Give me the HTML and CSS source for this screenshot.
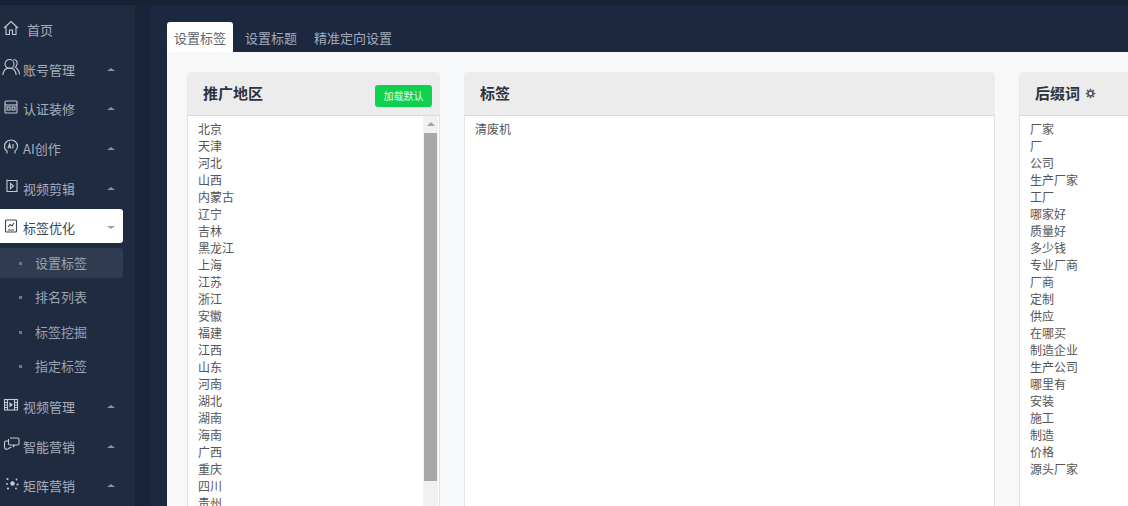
FILE: index.html
```html
<!DOCTYPE html>
<html lang="zh-CN">
<head>
    <meta charset="UTF-8">
    <meta name="viewport" content="width=device-width, initial-scale=1.0">
    <title>设置标签</title>
    <link rel="stylesheet" href="styles.css">
</head>
<body>

    <div class="topbar"></div>

    <div class="layout">
        <div class="sidebar">
            <div class="nav-item nav-home">
                <svg class="nav-icon" viewBox="0 0 18 18"><path d="M2 9 9 2.500 16 9M4 7.500V15.500H7.500V11H10.500V15.500H14V7.500"/></svg>
                <span>首页</span>
            </div>
            <div class="nav-item">
                <svg class="nav-icon" viewBox="0 0 18 18"><circle cx="7.500" cy="6" r="4.500"/><path d="M.8 17c.5-4.500 3-7 6.700-7s6.200 2.500 6.700 7M11.500 1.500c2.800 0 4 2.200 3.500 4.500s-1.500 3.500-2.500 3.500M14 10c2 1 3.200 3.500 3.500 6.500"/></svg>
                <span>账号管理</span><i class="caret"></i>
            </div>
            <div class="nav-item">
                <svg class="nav-icon" viewBox="0 0 18 18"><rect x="3" y="3" width="12" height="12" rx="1"/><path d="M3 7H15"/><rect x="5" y="9" width="3" height="3"/><rect x="10" y="9" width="3" height="3"/></svg>
                <span>认证装修</span><i class="caret"></i>
            </div>
            <div class="nav-item">
                <svg class="nav-icon" viewBox="0 0 18 18"><path d="M5 15.500V13C3 12 2.500 10 2.500 8.500 2.500 4.500 5.500 2 9 2s6.500 2.500 6.500 6.500c0 2-1 3.500-2.500 4.500V15.500"/><path d="M6 10.500 7.500 6 9 10.500M6.500 9H8.500M11 6V10.500"/></svg>
                <span>AI创作</span><i class="caret"></i>
            </div>
            <div class="nav-item">
                <svg class="nav-icon" viewBox="0 0 18 18"><path d="M5 2.500V3.500H15V14.500H5V3.500"/><path d="M8.500 6.500 11.500 9 8.500 11.500Z"/></svg>
                <span>视频剪辑</span><i class="caret"></i>
            </div>
            <div class="nav-item nav-active">
                <svg class="nav-icon" viewBox="0 0 18 18"><rect x="3.500" y="3" width="11" height="12" rx="1"/><path d="M6 13H12M6 10 8 7.500 10 9 12 6"/></svg>
                <span>标签优化</span><i class="caret caret-down"></i>
            </div>
            <div class="sub-nav">
                <div class="sub-item sub-active">设置标签</div>
                <div class="sub-item">排名列表</div>
                <div class="sub-item">标签挖掘</div>
                <div class="sub-item">指定标签</div>
            </div>
            <div class="nav-item">
                <svg class="nav-icon" viewBox="0 0 18 18"><rect x="2.500" y="3.500" width="13" height="10.500"/><path d="M5.500 3.500V14M12.500 3.500V14M2.500 6.500H5.500M2.500 9H5.500M2.500 11.500H5.500M12.500 6.500H15.500M12.500 9H15.500M12.500 11.500H15.500"/><path class="fill" d="M7.500 6 11 8.700 7.500 11.500Z"/></svg>
                <span>视频管理</span><i class="caret"></i>
            </div>
            <div class="nav-item">
                <svg class="nav-icon" viewBox="0 0 18 18"><path d="M8 3H15.500Q17 3 17 4.500V8.500Q17 10 15.500 10H13L11.500 11.500V10H8Q6.500 10 6.500 8.500V4"/><path d="M6 6H4Q2.500 6 2.500 7.500V12Q2.500 13.500 4 14.500L5.500 14L9.500 12"/></svg>
                <span>智能营销</span><i class="caret"></i>
            </div>
            <div class="nav-item">
                <svg class="nav-icon" viewBox="0 0 18 18"><g class="fill"><circle cx="10.500" cy="8.500" r="2.200"/><circle cx="5.500" cy="4" r="1.100"/><circle cx="14.500" cy="4.500" r=".9"/><circle cx="5" cy="9" r=".9"/><circle cx="15.500" cy="9.500" r="1.100"/><circle cx="6" cy="13.500" r="1.100"/><circle cx="14" cy="13.500" r=".9"/></g></svg>
                <span>矩阵营销</span><i class="caret"></i>
            </div>
        </div>

        <div class="side-strip"></div>

        <div class="main">
            <div class="tabs">
                <div class="tab tab-active">设置标签</div>
                <div class="tab">设置标题</div>
                <div class="tab">精准定向设置</div>
            </div>

            <div class="content">
                <div class="card card-side">
                    <div class="card-head">
                        <h2>推广地区</h2>
                        <button class="btn-load">加载默认</button>
                    </div>
                    <div class="card-body">
                        <div class="word-list" id="regionList"></div>
                        <div class="scrollbar">
                            <div class="scroll-up"></div>
                            <div class="scroll-thumb"></div>
                        </div>
                    </div>
                </div>

                <div class="card card-wide">
                    <div class="card-head">
                        <h2>标签</h2>
                    </div>
                    <div class="card-body">
                        <div class="word-list">清废机</div>
                    </div>
                </div>

                <div class="card card-side">
                    <div class="card-head card-head-left">
                        <h2>后缀词</h2>
                        <svg class="gear" viewBox="0 0 12 12"><circle cx="6" cy="6" r="2.700"/><path d="M6 .8V3M6 9V11.200M.8 6H3M9 6H11.200M2.300 2.300 3.900 3.900M8.100 8.100 9.700 9.700M9.700 2.300 8.100 3.900M3.900 8.100 2.300 9.700"/></svg>
                    </div>
                    <div class="card-body">
                        <div class="word-list" id="suffixList"></div>
                    </div>
                </div>
            </div>
        </div>
    </div>

    <script>
        const REGIONS = ["北京", "天津", "河北", "山西", "内蒙古", "辽宁", "吉林", "黑龙江", "上海", "江苏", "浙江", "安徽", "福建", "江西", "山东", "河南", "湖北", "湖南", "海南", "广西", "重庆", "四川", "贵州"];
        const SUFFIXES = ["厂家", "厂", "公司", "生产厂家", "工厂", "哪家好", "质量好", "多少钱", "专业厂商", "厂商", "定制", "供应", "在哪买", "制造企业", "生产公司", "哪里有", "安装", "施工", "制造", "价格", "源头厂家"];

        document.getElementById("regionList").innerText = REGIONS.join("\n");
        document.getElementById("suffixList").innerText = SUFFIXES.join("\n");
    </script>

</body>
</html>
```

FILE: styles.css
```css
/* General Styles */
html, body {
    height: 100%;
}

body {
    margin: 0;
    height: 506px;
    overflow: hidden;
    display: flex;
    flex-direction: column;
    background: #1c2840;
    font-family: "Noto Sans CJK SC", "Noto Sans", sans-serif;
    font-size: 13px;
}

.topbar {
    height: 5px;
    flex: none;
    background: #172133;
}

.layout {
    flex: 1;
    display: flex;
    min-height: 0;
}

/* Sidebar */
.sidebar {
    width: 135px;
    flex: none;
    padding: 5px 12px 0 0;
    box-sizing: border-box;
    background: #1f2b41;
}

.nav-item {
    height: 39.6px;
    display: flex;
    align-items: center;
    color: #a6aebb;
}

.nav-icon {
    width: 18px;
    height: 18px;
    flex: none;
    margin: -4px 3px 0 2px;
    fill: none;
    stroke: #c4cad3;
    stroke-width: 1.1;
}

.nav-icon .fill {
    fill: #c4cad3;
    stroke: none;
}

.nav-home .nav-icon {
    margin-right: 7px;
}

.nav-item .caret {
    margin-left: auto;
    margin-right: 8px;
    width: 0;
    height: 0;
    border-left: 4px solid transparent;
    border-right: 4px solid transparent;
    border-bottom: 3px solid #8792a3;
}

.nav-item .caret-down {
    border-bottom: 0;
    border-top: 3px solid #98a1af;
}

.nav-active {
    height: 34px;
    margin-top: 1px;
    padding-top: 4px;
    box-sizing: border-box;
    background: #ffffff;
    border-radius: 0 3px 3px 0;
    color: #3c4452;
}

.nav-active .nav-icon {
    stroke: #3c4452;
}

/* Sub Menu */
.sub-nav {
    padding: 5px 0 1.4px;
}

.sub-item {
    height: 30px;
    margin-bottom: 4.4px;
    padding: 1px 0 0 35px;
    box-sizing: border-box;
    line-height: 28px;
    color: #9aa3b1;
    border-radius: 0 3px 3px 0;
    position: relative;
}

.sub-item::before {
    content: "";
    position: absolute;
    left: 19px;
    top: 14px;
    width: 3px;
    height: 3px;
    background: #6d7787;
}

.sub-active {
    background: #2f3b50;
}

.side-strip {
    width: 15px;
    flex: none;
    background: #192438;
}

/* Main Area */
.main {
    flex: 1;
    min-width: 0;
    padding: 17px 0 0 17px;
    display: flex;
    flex-direction: column;
}

.tabs {
    display: flex;
    gap: 3px;
    height: 30px;
    flex: none;
}

.tab {
    padding: 0 6px 0 8px;
    line-height: 32px;
    color: #a3abb8;
    border-radius: 3px 3px 0 0;
}

.tab-active {
    padding: 0 7px;
    margin-right: 1px;
    background: #ffffff;
    color: #5c6470;
}

.content {
    flex: 1;
    display: flex;
    gap: 24px;
    padding: 20px 0 0 20px;
    background: #f7f8fa;
    overflow: hidden;
}

/* Card Styles */
.card {
    flex: none;
    display: flex;
    flex-direction: column;
    border-radius: 4px 4px 0 0;
    background: #ececec;
}

.card-side {
    width: 253px;
}

.card-wide {
    width: 531px;
}

.card-head {
    height: 43px;
    flex: none;
    display: flex;
    align-items: center;
    justify-content: space-between;
    padding: 0 8px 0 16px;
    border-bottom: 1px solid #dcdcdc;
}

.card-head-left {
    justify-content: flex-start;
    gap: 5px;
}

.card-head h2 {
    margin: -2px 0 0;
    font-size: 15px;
    font-weight: 700;
    color: #2b3240;
}

.btn-load {
    width: 57px;
    height: 22px;
    margin-top: 4px;
    padding: 0;
    border: 0;
    border-radius: 3px;
    background: #0fd14f;
    color: #e8fbef;
    font-family: inherit;
    font-size: 10px;
}

.gear {
    width: 11px;
    height: 11px;
    fill: none;
    stroke: #4b5361;
    stroke-width: 1.600;
}

.card-body {
    flex: 1;
    min-height: 0;
    display: flex;
    background: #ffffff;
    border: solid #e2e2e2;
    border-width: 0 1px;
}

.word-list {
    flex: 1;
    padding: 4px 10px;
    font-size: 12px;
    line-height: 17px;
    color: #555555;
    white-space: pre-line;
    overflow: hidden;
}

/* Scrollbar */
.scrollbar {
    width: 15px;
    flex: none;
    background: #f1f1f1;
    margin-right: 1px;
}

.scroll-up {
    height: 17px;
    position: relative;
}

.scroll-up::before {
    content: "";
    position: absolute;
    left: 4px;
    top: 6px;
    border-left: 4px solid transparent;
    border-right: 4px solid transparent;
    border-bottom: 4px solid #a3a3a3;
}

.scroll-thumb {
    height: 348px;
    margin: 0 1px;
    background: #a8a8a8;
}
```
